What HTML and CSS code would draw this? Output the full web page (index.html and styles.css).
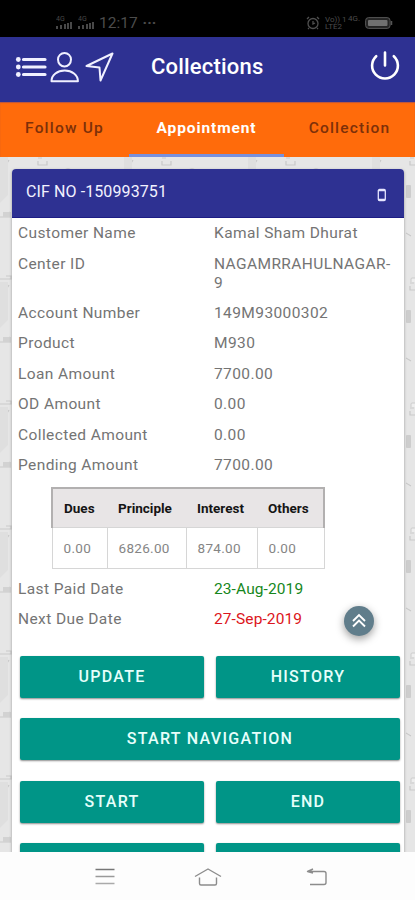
FILE: index.html
```html
<!DOCTYPE html>
<html lang="en">
<head>
<meta charset="utf-8">
<meta name="viewport" content="width=device-width, initial-scale=1">
<title>Collections</title>
<link rel="stylesheet" href="styles.css">
</head>
<body>
<div class="screen">
  <div class="status">
    <div class="status-left">
      <svg class="signal" width="39" height="16" viewBox="0 0 39 16">
        <g fill="#484848"><path d="M0 11h2v3H0zM4 10h2v4H4zM8 9h2v5H8zM11 8h2v6h-2zM14 7h2v7h-2zM22 11h2v3h-2zM26 10h2v4h-2zM30 9h2v5h-2zM33 8h2v6h-2zM36 7h2v7h-2z"/></g>
        <text x="0" y="6">4G</text><text x="22" y="6">4G</text>
      </svg>
      <span class="clock">12:17</span>
      <span class="more">···</span>
    </div>
    <div class="status-right">
      <svg width="14" height="14" viewBox="0 0 14 14" fill="none" stroke="#505050" stroke-width="1.3"><circle cx="7" cy="7.5" r="5"/><path d="M7 5v3l2-1M1 3l2-2M13 3l-2-2M3 12l-1 1M11 12l1 1"/></svg>
      <span class="volte">Vo)) 1<br>LTE2</span>
      <span class="net">4G.</span>
      <svg class="battery" width="28" height="12" viewBox="0 0 28 12"><rect x=".6" y=".6" width="24.5" height="10.8" rx="3" fill="#242424" stroke="#555"/><rect x="3" y="3" width="19.5" height="6" rx="1" fill="#707070"/><path d="M26.5 4v4" stroke="#555" stroke-width="1.5"/></svg>
    </div>
  </div>

  <header class="bar">
    <svg class="tools" width="102" height="36" viewBox="0 0 102 36" fill="none" stroke="#f0f0ff" stroke-linecap="round" stroke-linejoin="round">
      <path d="M8.5 9.5H30M8.5 17H30M8.5 24.500H30" stroke-width="3.200"/>
      <g fill="#f0f0ff" stroke="none"><circle cx="3.300" cy="9.500" r="2.400"/><circle cx="3.300" cy="17" r="2.400"/><circle cx="3.300" cy="24.500" r="2.400"/></g>
      <path d="M43 9.500a6.500 6.500 0 1 1 13 0a6.500 7 0 1 1-13 0M36.500 31.200c0-6.400 6-10.700 13.200-10.700s13.200 4.300 13.200 10.700z" stroke-width="2"/>
      <path d="M71.500 16L97.500 3.500L85.500 30.500L84.500 17.500z" stroke-width="2"/>
    </svg>
    <h1>Collections</h1>
    <svg class="power" width="32" height="32" viewBox="0 0 32 32" fill="none" stroke="#fff" stroke-width="2.600" stroke-linecap="round"><path d="M16 2.500V15.500M7.200 6.200A12.900 12.900 0 1 0 24.800 6.200"/></svg>
  </header>

  <nav class="tabs">
    <span class="tab">Follow Up</span>
    <span class="tab active">Appointment</span>
    <span class="tab">Collection</span>
  </nav>

  <main class="content">
    <svg class="pattern" width="415" height="695">
      <defs>
        <pattern id="doodles" width="124" height="125" patternUnits="userSpaceOnUse">
          <g fill="none" stroke="#c9c9c9" stroke-width="1.200">
            <path d="M38 4v4h9V4M64 14q4-4 8 0"/>
            <path d="M0 60h5l5-5M3 60h8M0 122h11v-3H6M9 3l-3 5"/>
            <rect x="34" y="1" width="0" height="0"/>
            <path d="M42 1h-4M34 76l5 3"/>
          </g>
          <path d="M3 55h8v5H3z" fill="#d2d2d2"/>
          <rect x="34" y="28" width="5" height="13" rx="1" fill="#cdcdcd"/>
          <rect x="39" y="121" width="10" height="9" rx="1" fill="#eee" stroke="#ccc"/>
          <path d="M0 0h8v38L0 46z" fill="#dfdfdf"/>
        </pattern>
      </defs>
      <rect width="415" height="695" fill="url(#doodles)"/>
    </svg>
    <section class="card">
      <div class="card-head">
        <span>CIF NO -150993751</span>
        <svg width="10" height="14" viewBox="0 0 10 14"><rect x="1.300" y="1.500" width="7" height="11" rx="1.200" fill="none" stroke="#e6e6ff" stroke-width="1.300"/><path d="M2 2.600h6M2 11.400h6" stroke="#e6e6ff" stroke-width="1.300"/></svg>
      </div>
      <dl class="details">
        <div class="row"><dt>Customer Name</dt><dd>Kamal Sham Dhurat</dd></div>
        <div class="row"><dt>Center ID</dt><dd>NAGAMRRAHULNAGAR-<br>9</dd></div>
        <div class="row"><dt>Account Number</dt><dd>149M93000302</dd></div>
        <div class="row"><dt>Product</dt><dd>M930</dd></div>
        <div class="row"><dt>Loan Amount</dt><dd>7700.00</dd></div>
        <div class="row"><dt>OD Amount</dt><dd>0.00</dd></div>
        <div class="row"><dt>Collected Amount</dt><dd>0.00</dd></div>
        <div class="row"><dt>Pending Amount</dt><dd>7700.00</dd></div>
      </dl>
      <table class="dues">
        <thead><tr><th class="c1">Dues</th><th class="c2">Principle</th><th class="c3">Interest</th><th class="c4">Others</th></tr></thead>
        <tbody><tr><td>0.00</td><td>6826.00</td><td>874.00</td><td>0.00</td></tr></tbody>
      </table>
      <dl class="details dates">
        <div class="row"><dt>Last Paid Date</dt><dd class="paid">23-Aug-2019</dd></div>
        <div class="row"><dt>Next Due Date</dt><dd class="due">27-Sep-2019</dd></div>
      </dl>
      <div class="actions">
        <button>UPDATE</button><button>HISTORY</button>
        <button class="wide">START NAVIGATION</button>
        <button>START</button><button>END</button>
        <button></button><button></button>
      </div>
    </section>
    <div class="fab">
      <svg width="18" height="18" viewBox="0 0 18 18" fill="none" stroke="#fff" stroke-width="1.900"><path d="M3 9l6-6 6 6M3 14.500l6-6 6 6"/></svg>
    </div>
  </main>

  <footer class="softkeys">
    <svg width="20" height="18" viewBox="0 0 20 18" fill="none" stroke-width="1.500"><path d="M.5 1.500h19" stroke="#777"/><path d="M.5 8.500h19" stroke="#999"/><path d="M.5 15.500h19" stroke="#aaa"/></svg>
    <svg width="28" height="20" viewBox="0 0 28 20" fill="none" stroke="#8c8c8c" stroke-width="1.400" stroke-linejoin="round"><path d="M1 9.500L14 2l13 7.500M5.500 10.500v6q0 1.500 1.500 1.500h14q1.500 0 1.500-1.500v-6"/></svg>
    <svg width="22" height="18" viewBox="0 0 22 18" fill="none" stroke="#8c8c8c" stroke-width="1.400" stroke-linejoin="round"><path d="M7 1L1.500 3.500H18q2 0 2 2v9q0 2-2 2H4M1.500 3.500L7 5"/></svg>
  </footer>
</div>
</body>
</html>
```
FILE: styles.css
```css
* { box-sizing: border-box; }
body { margin: 0; font-family: Roboto, "Liberation Sans", sans-serif; }
.screen { width: 415px; height: 900px; display: flex; flex-direction: column; overflow: hidden; background: #fff; }

.status { flex: none; height: 37px; background: #000; color: #4c4c4c; display: flex; justify-content: space-between; padding: 14px 22px 0 56px; }
.status-left, .status-right { display: flex; height: 18px; align-items: center; }
.signal text { font: 7px Roboto, sans-serif; fill: #484848; }
.clock { font-size: 15.500px; line-height: 18px; margin-left: 4px; }
.more { font-size: 15px; font-weight: 700; margin-left: 5px; }
.volte { font-size: 8px; line-height: 7px; margin-left: 5px; width: 23px; white-space: nowrap; }
.net { font-size: 8px; line-height: 10px; width: 13px; align-self: flex-start; }
.battery { margin-left: 4px; }

.bar { flex: none; height: 65px; background: #2e3192; color: #fff; display: flex; align-items: center; padding: 0 14px 0 15px; }
.tools { margin-bottom: 3px; }
.bar h1 { margin: -5px auto 0 34px; font-size: 22px; font-weight: 500; line-height: 26px; letter-spacing: .2px; }
.power { margin-bottom: 8px; }

.tabs { flex: none; height: 55px; background: #ff6b0b; display: flex; position: relative; z-index: 1; box-shadow: inset 0 1px 1px #b95740; }
.tab { flex: 0 0 129px; display: flex; align-items: center; justify-content: center; font-size: 15.500px; font-weight: 500; letter-spacing: 1.200px; color: #7d3009; border-bottom: 3px solid transparent; }
.tab.active { flex-basis: 155px; color: #fff; font-weight: 700; letter-spacing: .9px; border-color: #7890dc; }
.tab:last-child { flex-basis: 131px; }

.content { flex: none; height: 695px; background: #e6e6e6; padding: 12px 11px 0 12px; position: relative; overflow: hidden; }
.pattern { position: absolute; left: 0; top: 0; }
.card { position: relative; height: 700px; background: #fff; border-radius: 4px 4px 0 0; box-shadow: 0 1px 3px rgba(0, 0, 0, .35); overflow: hidden; }
.card-head { height: 49px; background: #2e3192; border-bottom: 1px solid #1d1d85; color: #f2f2ff; display: flex; justify-content: space-between; align-items: center; padding: 0 17px 0 14px; font-size: 16px; letter-spacing: .1px; }
.card-head span { margin-top: -3px; }
.card-head svg { margin-top: 4px; }

.details { margin: 0; padding: .6px 0 0 6px; color: #747474; font-size: 15.500px; line-height: 18.800px; letter-spacing: .4px; }
.row { display: flex; padding: 5.800px 0; }
.row dt { flex: 0 0 196px; }
.row dd { margin: 0; white-space: nowrap; }
.row .paid { color: #16871c; letter-spacing: 0.1px; }
.row .due { color: #dc1520; letter-spacing: 0.1px; }

.dues { table-layout: fixed; width: 272px; margin: 6px 0 0 39px; border-collapse: collapse; text-align: left; font-size: 13.500px; }
.dues thead { border: 2px solid #b2b0b0; border-bottom: 1px solid #c8c8c8; background: #e8e5e6; }
.dues th { height: 40px; padding: 0 0 0 11px; color: #151515; font-weight: 700; }
.dues td { height: 41px; padding: 0 0 0 11px; color: #858585; border: 1px solid #d6d6d6; letter-spacing: .3px; }
.c1 { width: 55px; }
.c2 { width: 79px; }
.c3 { width: 71px; }
.c4 { width: 67px; }
.dates { padding-top: 5px; }

.actions { display: grid; grid-template-columns: 184px 184px; gap: 20.400px 12px; padding: 21px 0 0 8px; }
.actions button { height: 42px; border: 0; padding: 0; border-radius: 2px; background: #009587; color: #e6fffb; font: 500 16px/42px Roboto, sans-serif; letter-spacing: 1.300px; box-shadow: 0 1px 2px rgba(0, 0, 0, .45); }
.actions .wide { grid-column: span 2; }

.fab { position: absolute; left: 344px; top: 449px; width: 30px; height: 30px; border-radius: 50%; background: #607d8b; display: flex; align-items: center; justify-content: center; box-shadow: 0 3px 8px rgba(0, 0, 0, .4); }

.softkeys { flex: 1; background: #fdfdfd; display: flex; align-items: center; padding: 1px 0 0 95px; }
.softkeys svg:nth-child(2) { margin-left: 79px; }
.softkeys svg:nth-child(3) { margin-left: 84px; }
```
